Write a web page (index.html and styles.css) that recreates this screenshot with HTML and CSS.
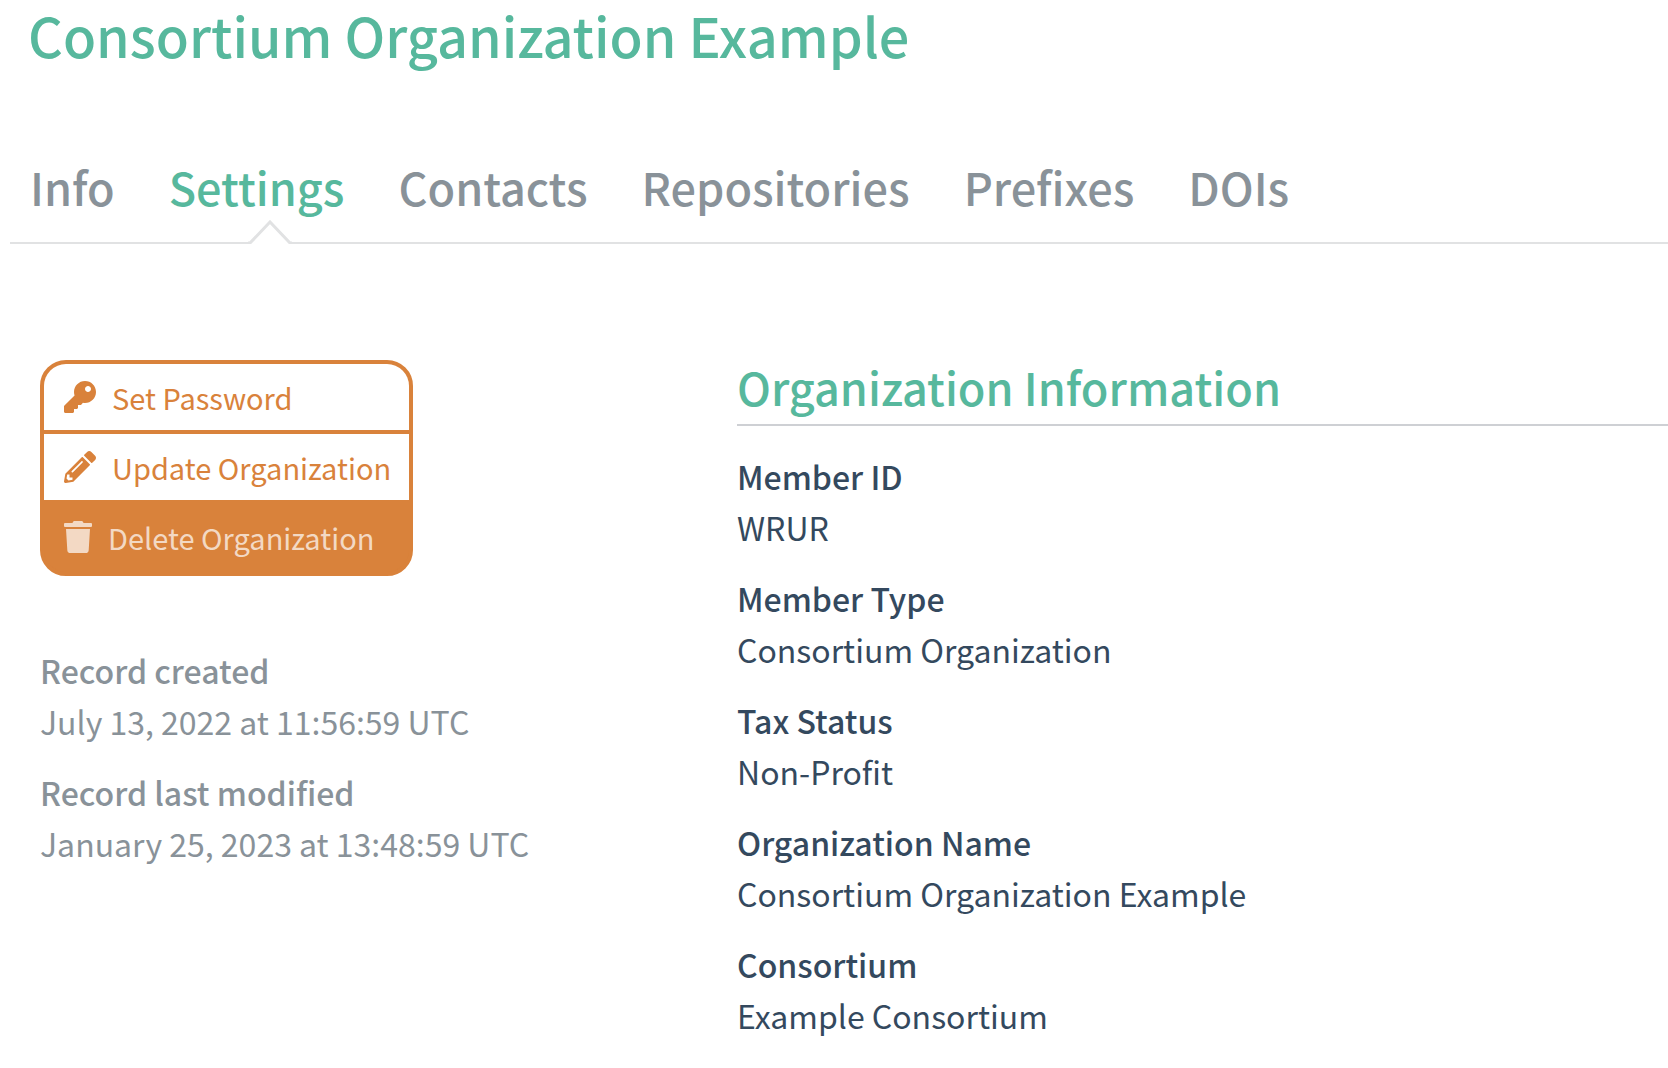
FILE: index.html
```html
<!DOCTYPE html>
<html lang="en">
<head>
    <meta charset="UTF-8">
    <meta name="viewport" content="width=device-width, initial-scale=1.0">
    <title>Consortium Organization Example</title>
    <link rel="stylesheet" href="styles.css">
</head>
<body>
    <h1>Consortium Organization Example</h1>

    <nav class="tabs">
        <a href="#info">Info</a>
        <a href="#settings" class="active">Settings
            <svg class="notch" width="44" height="24" viewBox="0 0 44 24"><path d="M2 24V23L22 2L42 23V24Z" fill="#fff"/><path d="M0 23H2L22 2L42 23H44" fill="none" stroke="#e1e2e3" stroke-width="3"/></svg>
        </a>
        <a href="#contacts">Contacts</a>
        <a href="#repositories">Repositories</a>
        <a href="#prefixes">Prefixes</a>
        <a href="#dois">DOIs</a>
    </nav>

    <div class="content">
        <aside class="sidebar">
            <div class="actions">
                <button type="button">
                    <svg width="32" height="32" viewBox="0 0 512 512"><path d="M512 176C512 273.200 433.200 352 336 352c-11.220 0-22.190-1.062-32.827-3.069l-24.012 27.014A24 24 0 0 1 261.223 384H224v40c0 13.255-10.745 24-24 24h-40v40c0 13.255-10.745 24-24 24H24c-13.255 0-24-10.745-24-24v-78.059c0-6.365 2.529-12.470 7.029-16.971l161.802-161.802C163.108 213.814 160 195.271 160 176 160 78.798 238.797 0 336 0 433.488 0 512 78.511 512 176zM336 128c0 26.510 21.490 48 48 48s48-21.490 48-48-21.490-48-48-48-48 21.490-48 48z" fill="currentColor"/></svg>
                    Set Password
                </button>
                <button type="button">
                    <svg width="32" height="32" viewBox="0 0 512 512"><path d="M497.900 142.100l-46.100 46.100c-4.700 4.700-12.300 4.700-17 0l-111-111c-4.700-4.700-4.700-12.300 0-17l46.100-46.100c18.700-18.700 49.100-18.700 67.900 0l60.100 60.100c18.800 18.700 18.800 49.100 0 67.900zM284.200 99.800L21.600 362.400.4 483.900c-2.900 16.400 11.400 30.600 27.800 27.800l121.500-21.300 262.600-262.600c4.700-4.700 4.700-12.300 0-17l-111-111c-4.800-4.700-12.400-4.700-17.100 0zM124.100 339.900c-5.500-5.500-5.500-14.300 0-19.800l154-154c5.500-5.500 14.300-5.500 19.800 0s5.500 14.300 0 19.800l-154 154c-5.500 5.500-14.300 5.500-19.800 0zM88 424h48v36.300l-64.500 11.300-31.100-31.100L51.700 376H88v48z" fill="currentColor" fill-rule="evenodd"/></svg>
                    Update Organization
                </button>
                <button type="button" class="delete">
                    <svg width="28" height="32" viewBox="0 0 448 512"><path d="M432 32H312l-9-19A24 24 0 0 0 281 0H167a24 24 0 0 0-22 13l-9 19H16A16 16 0 0 0 0 48v32a16 16 0 0 0 16 16h416a16 16 0 0 0 16-16V48a16 16 0 0 0-16-16zM53 467a48 48 0 0 0 48 45h246a48 48 0 0 0 48-45l21-339H32z" fill="currentColor"/></svg>
                    Delete Organization
                </button>
            </div>
            <dl class="record">
                <dt>Record created</dt>
                <dd>July 13, 2022 at 11:56:59 UTC</dd>
                <dt>Record last modified</dt>
                <dd>January 25, 2023 at 13:48:59 UTC</dd>
            </dl>
        </aside>

        <main class="details">
            <h2>Organization Information</h2>
            <dl>
                <dt>Member ID</dt>
                <dd>WRUR</dd>
                <dt>Member Type</dt>
                <dd>Consortium Organization</dd>
                <dt>Tax Status</dt>
                <dd>Non-Profit</dd>
                <dt>Organization Name</dt>
                <dd>Consortium Organization Example</dd>
                <dt>Consortium</dt>
                <dd>Example Consortium</dd>
            </dl>
        </main>
    </div>
</body>
</html>
```
FILE: styles.css
```css
* {
    box-sizing: border-box;
}
body {
    font-family: "Source Sans Pro", "Noto Sans CJK SC", sans-serif;
    background-color: #fff;
    color: #34495e;
    margin: 0;
    font-size: 32px;
    line-height: 51px;
}
h1 {
    margin: 0;
    padding: 0 28px;
    font-size: 54px;
    line-height: 70px;
    font-weight: 500;
    color: #57b89d;
}
.tabs {
    display: flex;
    gap: 54px;
    margin: 78px 0 0 10px;
    padding: 0 20px;
    height: 96px;
    border-bottom: 2px solid #e1e2e3;
    font-size: 45px;
    line-height: 78px;
    font-weight: 500;
}
.tabs a {
    position: relative;
    color: #899299;
    text-decoration: none;
}
.tabs .active {
    color: #57b89d;
}
.notch {
    position: absolute;
    left: calc(50% + 13px);
    bottom: -2px;
    transform: translateX(-50%);
}
.content {
    display: flex;
    padding: 116px 0 0 40px;
}
.sidebar {
    flex: 0 0 697px;
    color: #899299;
}
.actions {
    display: inline-flex;
    flex-direction: column;
    border: 4px solid #d9823b;
    border-radius: 26px;
    background-color: #d9823b;
    overflow: hidden;
}
.actions button {
    display: flex;
    align-items: center;
    gap: 16px;
    height: 70px;
    padding: 0 18px 0 20px;
    border: 0;
    border-bottom: 4px solid #d9823b;
    background-color: #fff;
    color: #d9823b;
    font-family: inherit;
    font-size: 29px;
}
.actions .delete {
    height: 68px;
    border-bottom-width: 2px;
    background-color: #d9823b;
    color: #f3d9c4;
}
dl {
    margin: 0;
}
dt {
    font-weight: 500;
}
dd {
    margin: 0 0 20px;
}
.record {
    margin-top: 69px;
}
.details {
    flex: 1;
}
h2 {
    margin: 0 0 25px;
    padding-bottom: 10px;
    border-bottom: 2px solid #ced0d4;
    font-size: 45px;
    line-height: 54px;
    font-weight: 500;
    color: #57b89d;
}
```
